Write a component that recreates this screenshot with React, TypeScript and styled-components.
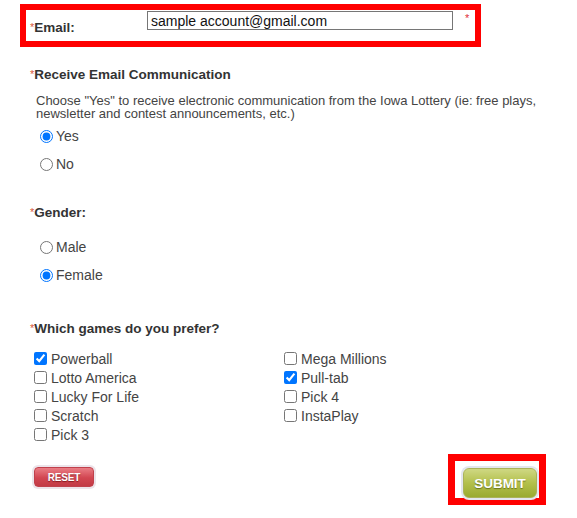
import React from "react";
import styled, { createGlobalStyle } from "styled-components";

const Global = createGlobalStyle`
  html, body { margin: 0; padding: 0; background: #fff; }
  body { font-family: "Liberation Sans", Arial, sans-serif; color: #444; }
  * { box-sizing: border-box; }
`;

const Page = styled.div`
  width: 577px;
  height: 518px;
  padding-top: 4px;
  overflow: hidden;
`;

const Highlight = styled.div`
  border: 7px solid #ff0000;
  background: #fff;
`;

const EmailBox = styled(Highlight)`
  margin-left: 20px;
  width: 461px;
  height: 43px;
  border-width: 6px;
  display: flex;
  align-items: flex-start;
`;

const Star = styled.span`
  color: #d9553a;
  font-size: 11px;
  font-weight: normal;
  vertical-align: top;
  position: relative;
  top: -1px;
`;

const EmailLabel = styled.label`
  width: 121px;
  padding: 10px 0 0 4px;
  font-size: 13.5px;
  line-height: 16px;
  font-weight: bold;
  color: #333;
`;

const TextInput = styled.input`
  margin-top: 1px;
  width: 306px;
  height: 19px;
  border: 1px solid #767676;
  border-radius: 0;
  padding: 0 3px;
  font-family: "Liberation Sans", Arial, sans-serif;
  font-size: 14px;
  color: #111;
  outline: none;
`;

const SideStar = styled.span`
  margin: 2px 0 0 12px;
  color: #e0303a;
  font-size: 11px;
`;

const Heading = styled.div<{ $top: number }>`
  margin: ${(p) => p.$top}px 0 0 30px;
  font-size: 13.5px;
  line-height: 16px;
  font-weight: bold;
  color: #333;
`;

const Note = styled.p`
  margin: 11px 0 0 36px;
  width: 520px;
  font-size: 13px;
  line-height: 13px;
  color: #444;
`;

const Options = styled.div<{ $top: number }>`
  margin: ${(p) => p.$top}px 0 0 35px;
`;

const RadioRow = styled.label`
  display: flex;
  align-items: center;
  height: 28px;
  font-size: 14px;
  color: #444;
  input {
    margin: 0 3px 0 5px;
    width: 13px;
    height: 13px;
    accent-color: #0075ff;
  }
`;

const Games = styled.div`
  margin: 12px 0 0 30px;
  display: grid;
  grid-template-columns: 250px 250px;
  grid-template-rows: repeat(5, 19px);
  grid-auto-flow: column;
`;

const CheckRow = styled.label`
  display: flex;
  align-items: center;
  font-size: 14px;
  color: #444;
  input {
    margin: 0 4px 0 4px;
    width: 13px;
    height: 13px;
    accent-color: #0075ff;
  }
`;

const Actions = styled.div`
  margin: 10px 0 0 34px;
  width: 512px;
  display: flex;
  justify-content: space-between;
  align-items: flex-start;
`;

const ResetButton = styled.button`
  margin-top: 13px;
  width: 60px;
  height: 20px;
  padding: 0;
  border: 1px solid #c0414c;
  border-radius: 4px;
  background: linear-gradient(#ea7d85, #d24651 55%, #c23a45);
  box-shadow: 0 0 0 2px #ece4ea;
  color: #fff;
  font-family: "Liberation Sans", Arial, sans-serif;
  font-weight: bold;
  font-size: 10px;
  letter-spacing: -0.2px;
  text-shadow: 0 1px 1px rgba(90, 0, 0, 0.6);
`;

const SubmitBox = styled(Highlight)`
  padding: 7px 2px 0 8px;
`;

const SubmitButton = styled.button`
  display: block;
  width: 74px;
  height: 30px;
  padding: 0;
  border: 1px solid #aab35a;
  border-radius: 6px;
  background: linear-gradient(#cfd883, #b3c04c 50%, #9aab2f);
  box-shadow: 0 0 0 2px #e3e6ee;
  color: #fff;
  font-family: "Liberation Sans", Arial, sans-serif;
  font-weight: bold;
  font-size: 13.5px;
  text-shadow: 0 1px 1px rgba(60, 70, 0, 0.6);
`;

const left = ["Powerball", "Lotto America", "Lucky For Life", "Scratch", "Pick 3"];
const right = ["Mega Millions", "Pull-tab", "Pick 4", "InstaPlay"];
const checked = new Set(["Powerball", "Pull-tab"]);

export default function App() {
  return (
    <>
      <Global />
      <Page>
        <EmailBox>
          <EmailLabel>
            <Star>*</Star>Email:
          </EmailLabel>
          <TextInput defaultValue="sample account@gmail.com" />
          <SideStar>*</SideStar>
        </EmailBox>

        <Heading $top={20}>
          <Star>*</Star>Receive Email Communication
        </Heading>
        <Note>
          Choose "Yes" to receive electronic communication from the Iowa Lottery (ie: free plays,
          newsletter and contest announcements, etc.)
        </Note>
        <Options $top={2}>
          <RadioRow>
            <input type="radio" name="comm" defaultChecked />
            Yes
          </RadioRow>
          <RadioRow>
            <input type="radio" name="comm" />
            No
          </RadioRow>
        </Options>

        <Heading $top={27}>
          <Star>*</Star>Gender:
        </Heading>
        <Options $top={12}>
          <RadioRow>
            <input type="radio" name="gender" />
            Male
          </RadioRow>
          <RadioRow>
            <input type="radio" name="gender" defaultChecked />
            Female
          </RadioRow>
        </Options>

        <Heading $top={32}>
          <Star>*</Star>Which games do you prefer?
        </Heading>
        <Games>
          {[...left, ...right].map((g) => (
            <CheckRow key={g}>
              <input type="checkbox" defaultChecked={checked.has(g)} />
              {g}
            </CheckRow>
          ))}
        </Games>

        <Actions>
          <ResetButton type="button">RESET</ResetButton>
          <SubmitBox>
            <SubmitButton type="button">SUBMIT</SubmitButton>
          </SubmitBox>
        </Actions>
      </Page>
    </>
  );
}
